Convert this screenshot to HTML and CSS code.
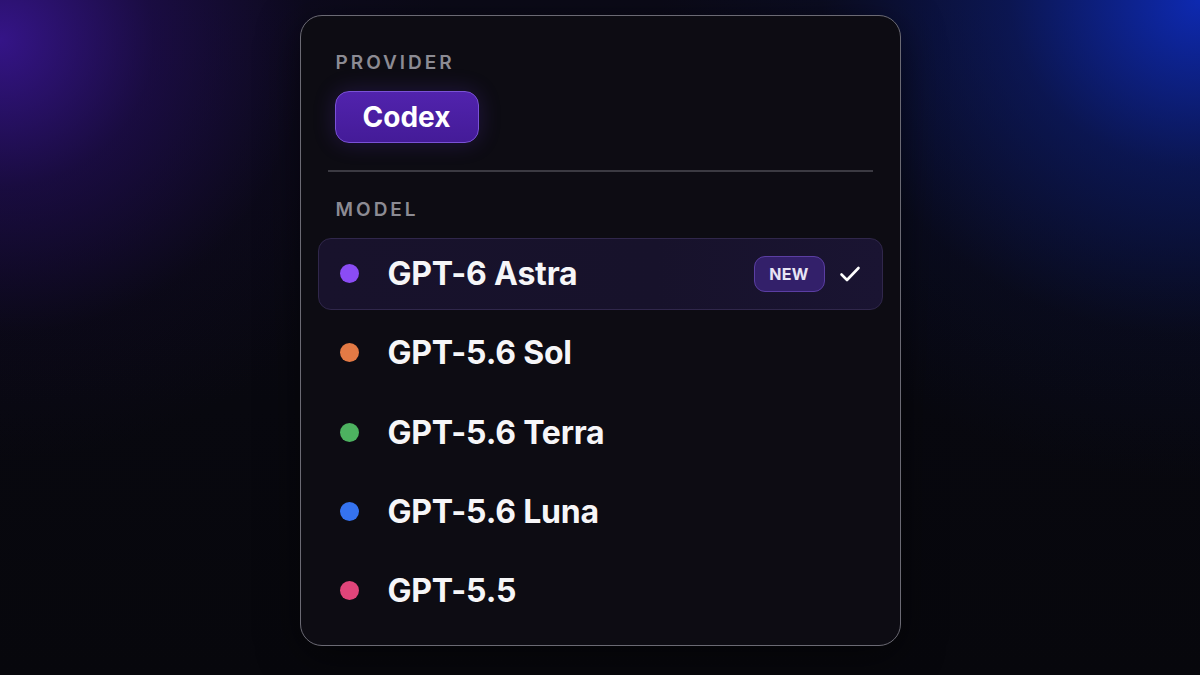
FILE: index.html
```html
<!DOCTYPE html>
<html lang="en">
<head>
  <meta charset="UTF-8">
  <title>Model Picker</title>
  <link rel="stylesheet" href="styles.css">
</head>
<body>
  <div class="picker">
    <div class="section-label provider-label">PROVIDER</div>
    <button class="provider-pill">Codex</button>

    <div class="divider"></div>

    <div class="section-label model-label">MODEL</div>
    <ul class="model-list">
      <li class="model selected">
        <span class="dot purple"></span>
        <span class="model-name">GPT-6 Astra</span>
        <span class="badge">NEW</span>
        <svg class="check" width="24" height="24" viewBox="0 0 24 24" fill="none">
          <path d="M3.5 12.5l5.5 5.5L20.5 6" stroke="#fff" stroke-width="2.6" stroke-linecap="round" stroke-linejoin="round"/>
        </svg>
      </li>
      <li class="model">
        <span class="dot orange"></span>
        <span class="model-name">GPT-5.6 Sol</span>
      </li>
      <li class="model">
        <span class="dot green"></span>
        <span class="model-name">GPT-5.6 Terra</span>
      </li>
      <li class="model">
        <span class="dot blue"></span>
        <span class="model-name">GPT-5.6 Luna</span>
      </li>
      <li class="model">
        <span class="dot pink"></span>
        <span class="model-name">GPT-5.5</span>
      </li>
    </ul>
  </div>
</body>
</html>
```

FILE: styles.css
```css
:root {
  --bg: #08080f;
  --card-bg: #0d0c13;
  --card-border: #6b6a74;
  --label: #8c8b93;
  --text: #f6f6f8;
}

body {
  font-family: 'Inter', 'Noto Sans', sans-serif;
  background:
    radial-gradient(ellipse 440px 420px at 0 40px, rgba(60, 22, 155, 0.85) 0%, rgba(38, 14, 100, 0.55) 35%, rgba(20, 10, 50, 0.2) 70%, rgba(10, 10, 20, 0) 100%),
    radial-gradient(ellipse 540px 480px at 1200px 0, rgba(14, 44, 190, 0.92) 0%, rgba(12, 32, 130, 0.55) 35%, rgba(10, 20, 70, 0.2) 70%, rgba(10, 15, 40, 0) 100%),
    linear-gradient(180deg, #0b0a18 0%, #08080f 60%, #07070c 100%);
  color: var(--text);
  margin: 0;
  height: 675px;
  overflow: hidden;
  display: flex;
  justify-content: center;
  align-items: flex-start;
}

.picker {
  box-sizing: border-box;
  width: 601px;
  height: 631px;
  margin-top: 15px;
  padding: 0 17px;
  background: var(--card-bg);
  border: 1.5px solid var(--card-border);
  border-radius: 22px;
  box-shadow: 0 10px 40px rgba(0, 0, 0, 0.5);
}

.section-label {
  font-size: 19px;
  font-weight: 600;
  letter-spacing: 3px;
  line-height: 26px;
  color: var(--label);
  padding-left: 18px;
}

.provider-label {
  margin-top: 34px;
}

.provider-pill {
  display: block;
  margin: 15px 0 0 17px;
  width: 144px;
  height: 52px;
  padding: 0;
  font-family: inherit;
  font-size: 28px;
  font-weight: 700;
  color: #fff;
  background: linear-gradient(180deg, #5123ad 0%, #441b98 100%);
  border: 1.5px solid #7a52d6;
  border-radius: 14px;
  box-shadow: 0 0 22px rgba(110, 60, 230, 0.22);
}

.divider {
  height: 1.5px;
  background: #3b3a42;
  margin: 27px 10px 0;
}

.model-label {
  margin-top: 25px;
}

.model-list {
  list-style: none;
  margin: 15px 0 0;
  padding: 0;
  display: flex;
  flex-direction: column;
  gap: 7.3px;
}

.model {
  display: flex;
  align-items: center;
  height: 72px;
  padding: 0 20px 0 21px;
  border: 1.5px solid transparent;
  border-radius: 13px;
  box-sizing: border-box;
}

.model.selected {
  background: linear-gradient(90deg, #18122c 0%, #17122b 60%, #1a1432 100%);
  border-color: #30274b;
}

.dot {
  width: 19px;
  height: 19px;
  border-radius: 50%;
  flex-shrink: 0;
  margin-right: 29px;
}

.dot.purple { background: #8b4cf5; }
.dot.orange { background: #e37a45; }
.dot.green { background: #4db260; }
.dot.blue { background: #3573ef; }
.dot.pink { background: #e0457a; }

.model-name {
  font-size: 32px;
  font-weight: 700;
  letter-spacing: -0.2px;
  flex: 1;
}

.badge {
  box-sizing: border-box;
  width: 71px;
  height: 36px;
  display: flex;
  align-items: center;
  justify-content: center;
  font-size: 16px;
  font-weight: 700;
  letter-spacing: 0.4px;
  color: #e8e4f5;
  background: #33206a;
  border: 1.5px solid #5b3ea3;
  border-radius: 11px;
  margin-right: 13px;
}

.check {
  flex-shrink: 0;
}
```
